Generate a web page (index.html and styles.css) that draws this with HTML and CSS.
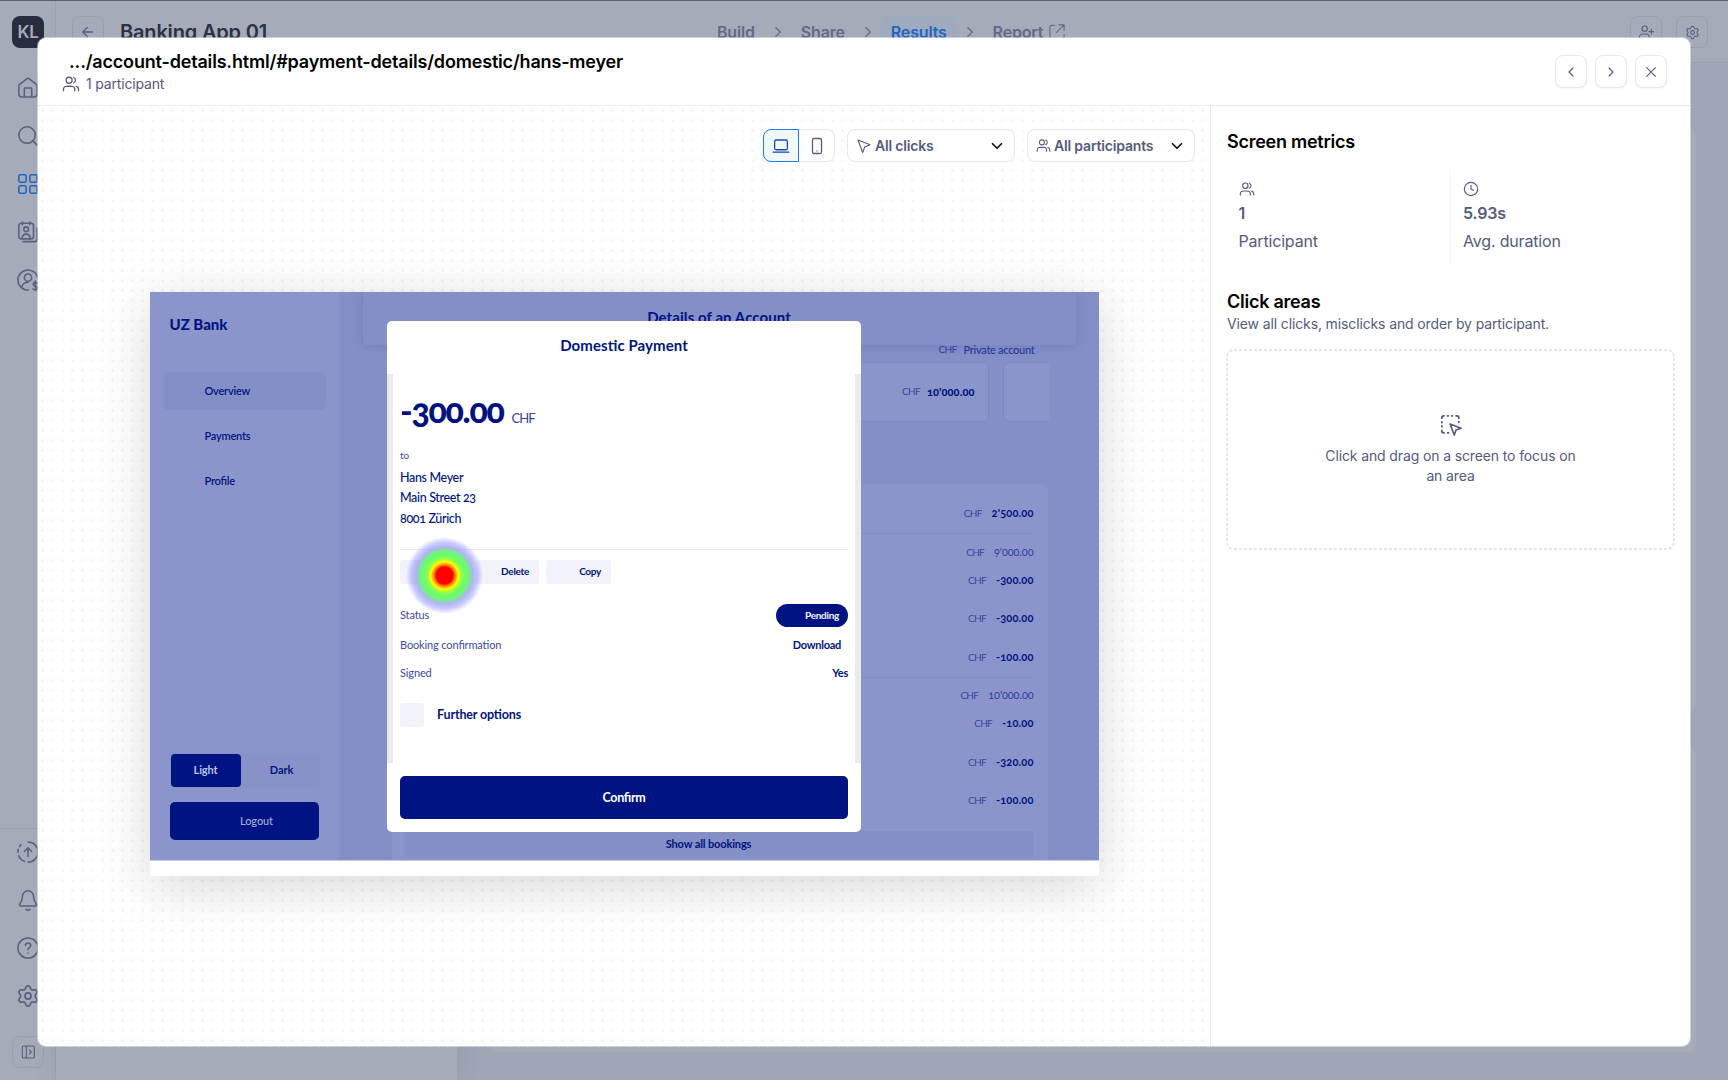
FILE: index.html
```html
<!DOCTYPE html>
<html lang="en">
<head>
<meta charset="utf-8">
<title>Banking App 01 – Results</title>
<link rel="stylesheet" href="styles.css">
</head>
<body>
<svg class="sprite" aria-hidden="true">
  <symbol id="i-users" viewBox="0 0 24 24"><path d="M22 21V19C22 17.14 20.73 15.57 19 15.13M15.5 3.29C16.97 3.88 18 5.32 18 7C18 8.68 16.97 10.12 15.5 10.71M17 21C17 19.14 17 18.2 16.7 17.47C16.29 16.49 15.51 15.71 14.53 15.3C13.8 15 12.86 15 11 15H8C6.14 15 5.2 15 4.47 15.3C3.49 15.71 2.71 16.49 2.3 17.47C2 18.2 2 19.14 2 21M13.5 7C13.5 9.21 11.71 11 9.5 11C7.29 11 5.5 9.21 5.5 7C5.5 4.79 7.29 3 9.5 3C11.71 3 13.5 4.79 13.5 7Z"/></symbol>
  <symbol id="i-gear" viewBox="0 0 24 24"><path d="M9.395 19.371L9.979 20.686C10.153 21.077 10.437 21.409 10.796 21.643C11.155 21.876 11.574 22 12.002 22C12.43 22 12.849 21.876 13.208 21.643C13.567 21.409 13.85 21.077 14.024 20.686L14.608 19.371C14.817 18.905 15.166 18.516 15.608 18.26C16.053 18.003 16.568 17.894 17.078 17.948L18.508 18.1C18.934 18.145 19.364 18.066 19.745 17.871C20.127 17.677 20.443 17.376 20.657 17.006C20.871 16.635 20.974 16.21 20.951 15.783C20.929 15.356 20.783 14.944 20.531 14.598L19.684 13.434C19.383 13.017 19.221 12.515 19.224 12C19.224 11.487 19.386 10.986 19.688 10.571L20.535 9.408C20.787 9.062 20.933 8.65 20.955 8.223C20.978 7.795 20.876 7.371 20.662 7C20.448 6.629 20.131 6.328 19.75 6.134C19.368 5.94 18.939 5.861 18.513 5.906L17.083 6.058C16.572 6.111 16.058 6.002 15.613 5.746C15.17 5.488 14.82 5.097 14.613 4.629L14.024 3.314C13.85 2.923 13.567 2.591 13.208 2.357C12.849 2.124 12.43 2 12.002 2C11.574 2 11.155 2.124 10.796 2.357C10.437 2.591 10.153 2.923 9.979 3.314L9.395 4.629C9.188 5.097 8.838 5.488 8.395 5.746C7.95 6.002 7.436 6.111 6.925 6.058L5.491 5.906C5.065 5.861 4.635 5.94 4.254 6.134C3.872 6.328 3.556 6.629 3.342 7C3.128 7.371 3.025 7.795 3.048 8.223C3.07 8.65 3.216 9.062 3.468 9.408L4.315 10.571C4.617 10.986 4.78 11.487 4.779 12C4.78 12.513 4.617 13.014 4.315 13.429L3.468 14.592C3.216 14.938 3.07 15.35 3.048 15.777C3.025 16.205 3.128 16.63 3.342 17C3.556 17.371 3.873 17.671 4.254 17.865C4.635 18.06 5.065 18.139 5.491 18.094L6.921 17.942C7.431 17.889 7.946 17.998 8.391 18.254C8.835 18.511 9.187 18.902 9.395 19.371Z"/><circle cx="12" cy="12" r="3"/></symbol>
  <symbol id="i-right" viewBox="0 0 24 24"><path d="M9 18l6-6-6-6"/></symbol>
  <symbol id="i-left" viewBox="0 0 24 24"><path d="M15 18l-6-6 6-6"/></symbol>
  <symbol id="i-down" viewBox="0 0 24 24"><path d="M6 9l6 6 6-6"/></symbol>
</svg>

<div class="app">
  <nav class="rail">
    <div class="avatar">KL</div>
    <div class="rail-top">
      <svg class="icon" viewBox="0 0 24 24"><path d="M8 21.5V13.6C8 13 8 12.8 8.1 12.5C8.2 12.4 8.4 12.2 8.5 12.1C8.8 12 9 12 9.6 12H14.4C15 12 15.2 12 15.5 12.1C15.6 12.2 15.8 12.4 15.9 12.5C16 12.8 16 13 16 13.6V21.5M11 1.8L3.2 7.8C2.4 8.5 2 9 2 10.2V18.3C2 20.8 3 21.8 5.3 21.8H18.7C21 21.8 22 20.8 22 18.3V10.2C22 9 21.6 8.5 20.8 7.8L13 1.8C12.4 1.3 11.6 1.3 11 1.8Z"/></svg>
      <svg class="icon" viewBox="0 0 24 24"><circle cx="11" cy="11" r="9"/><path d="M22 22l-4.5-4.5"/></svg>
      <svg class="icon is-active" viewBox="0 0 24 24"><rect x="2" y="2" width="8" height="8" rx="1.5"/><rect x="14" y="2" width="8" height="8" rx="1.5"/><rect x="2" y="14" width="8" height="8" rx="1.5"/><rect x="14" y="14" width="8" height="8" rx="1.5"/></svg>
      <svg class="icon" viewBox="0 0 24 24"><path d="M6 1v3M14 1v3M22 8v11.500C22 21.500 21 22.500 19 22.500H6.500"/><rect x="2" y="2.500" width="16" height="17" rx="2.500"/><circle cx="10" cy="9" r="2.600"/><path d="M5.500 19.500C5.700 15.800 7.200 14.300 10 14.300C12.800 14.300 14.300 15.800 14.500 19.500"/></svg>
      <svg class="icon" viewBox="0 0 24 24"><path d="M12.500 23C6 23 1 18 1 12C1 6 6 1 12 1C17.500 1 22 5 23 10"/><circle cx="12" cy="9.500" r="4"/><path d="M5 20C6 16 8.500 14.500 12 14.500M22.500 15.500C21.500 14.500 17.500 14.300 17.500 16.700C17.500 19.500 22.500 18 22.500 20.800C22.500 23 18.500 23 17.300 21.800M20 13v11.500"/></svg>
    </div>
    <div class="rail-bottom">
      <svg class="icon" viewBox="0 0 24 24"><path d="M16 11.500l-4-4-4 4M12 7.500V17M12 1A11 11 0 0 1 12 23M1.800 16A11 11 0 0 0 8 22.200M1 12.500A11 11 0 0 1 1.400 9M2.800 6A11 11 0 0 1 4.300 4.200"/></svg>
      <svg class="icon" viewBox="0 0 24 24"><path d="M10 22.300C11 23.200 13 23.200 14 22.300M18 8A6 6 0 0 0 6 8C6 11.500 5 13.500 3.500 15.500C2.500 17 2 18.500 4 18.500H20C22 18.500 21.500 17 20.500 15.500C19 13.500 18 11.500 18 8Z"/></svg>
      <svg class="icon" viewBox="0 0 24 24"><circle cx="12" cy="12" r="11"/><path d="M9 9C9.300 7.400 10.600 6.500 12 6.500C13.700 6.500 15 7.700 15 9.300C15 11.500 12 11.800 12 14M12 17.500h.01"/></svg>
      <svg class="icon" viewBox="0 0 24 24"><use href="#i-gear" transform="translate(-1.200 -1.200) scale(1.100)"/></svg>
      <span class="ghost-btn"><svg class="icon s16" viewBox="0 0 24 24"><rect x="3.500" y="3" width="18" height="18" rx="1.500"/><path d="M9.500 3v18M14 9l3 3-3 3"/></svg></span>
    </div>
  </nav>

  <div class="workspace">
    <header class="topbar">
      <span class="ghost-btn"><svg class="icon s18" viewBox="0 0 24 24"><path d="M18 12H5.500M11 6l-6 6 6 6"/></svg></span>
      <h1 class="project">Banking App 01</h1>
      <div class="steps">
        <span>Build</span><svg class="icon s18"><use href="#i-right"/></svg>
        <span>Share</span><svg class="icon s18"><use href="#i-right"/></svg>
        <span class="current">Results</span><svg class="icon s18"><use href="#i-right"/></svg>
        <span>Report</span><svg class="icon s18 ext" viewBox="0 0 24 24"><path d="M9 3H5C3.500 3 2.500 4 2.500 5.500V19C2.500 20.500 3.500 21.500 5 21.500H19C20.500 21.500 21.500 20.500 21.500 19V15M14.500 2.500H21.500V9.500M21.500 2.500L11.500 12.500"/></svg>
      </div>
      <div class="top-actions">
        <span class="ghost-btn"><svg class="icon s16" viewBox="0 0 24 24"><path d="M20 8v7M16.500 11.500h7M14 7A4 4 0 1 1 6 7A4 4 0 0 1 14 7ZM2 21C2 17 4 15 7.500 15H12C15 15 17 17 17 21"/></svg></span>
        <span class="ghost-btn"><svg class="icon s15"><use href="#i-gear"/></svg></span>
      </div>
    </header>
    <div class="stage">
      <div class="stage-list"></div>
      <div class="stage-cards"><div></div><div></div></div>
    </div>
  </div>
</div>

<section class="modal">
  <header class="modal-head">
    <div>
      <h2 class="modal-title">.../account-details.html/#payment-details/domestic/hans-meyer</h2>
      <p class="modal-sub"><svg class="icon s18"><use href="#i-users"/></svg>1 participant</p>
    </div>
    <div class="head-actions">
      <button class="btn"><svg class="icon s16"><use href="#i-left"/></svg></button>
      <button class="btn"><svg class="icon s16"><use href="#i-right"/></svg></button>
      <button class="btn"><svg class="icon s16" viewBox="0 0 24 24"><path d="M18.500 5.500l-13 13M5.500 5.500l13 13"/></svg></button>
    </div>
  </header>
  <div class="modal-body">
    <div class="canvas">
      <div class="toolbar">
        <div class="segment">
          <span class="seg on"><svg class="icon s18" viewBox="0 0 24 24"><rect x="3.500" y="4" width="17" height="13" rx="2"/><path d="M1.500 20.200h21"/></svg></span>
          <span class="seg"><svg class="icon s18" viewBox="0 0 24 24"><rect x="6" y="2" width="12" height="20" rx="2"/><path d="M12 18.500h.01"/></svg></span>
        </div>
        <div class="select"><svg class="icon s16" viewBox="0 0 24 24"><path d="M3 3l7 19 3-8.500L21 10z"/></svg><span>All clicks</span><svg class="icon s18 caret"><use href="#i-down"/></svg></div>
        <div class="select"><svg class="icon s15"><use href="#i-users"/></svg><span>All participants</span><svg class="icon s18 caret"><use href="#i-down"/></svg></div>
      </div>

      <div class="capture">
        <div class="bank">
          <aside class="bank-side">
            <div class="bank-logo">UZ Bank</div>
            <div class="bank-nav"><span class="sel">Overview</span><span>Payments</span><span>Profile</span></div>
            <div class="bank-theme"><span class="lit">Light</span><span>Dark</span></div>
            <div class="bank-logout">Logout</div>
          </aside>
          <main class="bank-main">
            <div class="bank-header">Details of an Account</div>
            <div class="bank-meta"><small>CHF</small><span>Private account</span></div>
            <div class="bank-cards">
              <div class="acct"><small>CHF</small><b>10'000.00</b></div>
              <div class="acct cut"></div>
            </div>
            <div class="bookings">
              <div class="day"><p class="row"><small>CHF</small><b>2'500.00</b></p></div>
              <div class="day">
                <p class="row total"><small>CHF</small><span>9'000.00</span></p>
                <p class="row"><small>CHF</small><b>-300.00</b></p>
                <p class="row"><small>CHF</small><b>-300.00</b></p>
                <p class="row"><small>CHF</small><b>-100.00</b></p>
              </div>
              <div class="day">
                <p class="row total"><small>CHF</small><span>10'000.00</span></p>
                <p class="row"><small>CHF</small><b>-10.00</b></p>
                <p class="row"><small>CHF</small><b>-320.00</b></p>
                <p class="row"><small>CHF</small><b>-100.00</b></p>
              </div>
              <div class="show-all">Show all bookings</div>
            </div>
          </main>
          <div class="dialog">
            <div class="dialog-title">Domestic Payment</div>
            <div class="dialog-body">
              <div class="amount"><b>-300.00</b><span>CHF</span></div>
              <div class="to">to</div>
              <div class="address">Hans Meyer<br>Main Street 23<br>8001 Zürich</div>
              <div class="chips"><span class="chip first"></span><span class="chip del">Delete</span><span class="chip copy">Copy</span></div>
              <div class="fact"><span>Status</span><span class="pending">Pending</span></div>
              <div class="fact book"><span>Booking confirmation</span><b>Download</b></div>
              <div class="fact signed"><span>Signed</span><b>Yes</b></div>
              <div class="further"><i></i>Further options</div>
            </div>
            <div class="confirm">Confirm</div>
          </div>
          <div class="heat"></div>
        </div>
      </div>
    </div>

    <aside class="panel">
      <h3>Screen metrics</h3>
      <div class="metrics">
        <div class="metric"><svg class="icon s15"><use href="#i-users"/></svg><b>1</b><span>Participant</span></div>
        <div class="metric"><svg class="icon s16" viewBox="0 0 24 24"><circle cx="12" cy="12" r="10"/><path d="M12 6.500V12l3.500 2"/></svg><b>5.93s</b><span>Avg. duration</span></div>
      </div>
      <h3>Click areas</h3>
      <p class="hint">View all clicks, misclicks and order by participant.</p>
      <div class="dropzone">
        <svg class="dashes" aria-hidden="true"><rect x="1" y="1" width="446" height="198" rx="7"/></svg>
        <svg class="icon s22" viewBox="0 0 24 24"><path d="M2 4.500V4A2 2 0 0 1 4 2h.5M8.300 2h.8M12.700 2h.8M17.500 2H18.500A2 2 0 0 1 20.500 4v.500M20.500 8.300v.8M2 8.500v.8M2 13v.8M2 18v.5A2 2 0 0 0 4 20.500h.5M8.300 20.500h1" stroke-width="2"/><path d="M11 11l4.500 12 2-5.500L23 15.500z" stroke-width="1.800"/></svg>
        <p>Click and drag on a screen to focus on an area</p>
      </div>
    </aside>
  </div>
</section>
</body>
</html>
```
FILE: styles.css
```css
* { box-sizing: border-box; }
body, h1, h2, h3, p { margin: 0; }
body {
  width: 1728px; height: 1080px; overflow: hidden;
  font-family: Inter, "Liberation Sans", sans-serif;
  letter-spacing: -0.011em; color: #555b7d; background: #a6abb9;
}
.sprite { position: absolute; width: 0; height: 0; }
.icon { width: 22px; height: 22px; flex: none; fill: none; stroke: currentColor; stroke-width: 1.7; stroke-linecap: round; stroke-linejoin: round; }
.s15 { width: 15px; height: 15px; }
.s16 { width: 16px; height: 16px; }
.s18 { width: 18px; height: 18px; }
.s22 { width: 22px; height: 22px; }

/* dimmed page behind the modal */
.app { display: flex; width: 1728px; height: 1080px; border-top: 1px solid #5c5d68; color: #5a6080; }
.rail { width: 56px; display: flex; flex-direction: column; border-right: 1px solid #9ca1b1; }
.avatar { width: 32px; height: 32px; margin: 15px 0 0 12px; border-radius: 8px; background: #272d3e; color: #a6abb9; font: 600 17px/33px Inter, sans-serif; letter-spacing: -0.02em; text-align: center; }
.rail-top { display: flex; flex-direction: column; gap: 26px; padding: 29px 0 0 17px; }
.rail-top .is-active { color: #2464c4; }
.rail-bottom { margin-top: auto; height: 252px; padding: 12px 0 0 17px; border-top: 1px solid #9ca1b1; display: flex; flex-direction: column; gap: 26px; }
.rail-bottom .ghost-btn { margin: 3px 0 0 -5px; }
.ghost-btn { width: 32px; height: 32px; flex: none; display: flex; align-items: center; justify-content: center; border: 1px solid #9a9fb0; border-radius: 8px; }
.workspace { flex: 1; display: flex; flex-direction: column; }
.topbar { height: 63px; padding: 15px 18px 0 16px; display: flex; align-items: flex-start; border-bottom: 1px solid #9a9fb0; }
.project { width: 587px; margin-left: 16px; font-size: 20px; font-weight: 600; line-height: 33px; color: #2b3142; }
.steps { display: flex; align-items: center; font-size: 16px; font-weight: 600; line-height: 34px; margin: -1px 0 0 10px; color: #636987; flex: 1; }
.steps .icon { margin: 0 14px; stroke-width: 1.5; }
.steps .current { margin: 0 -10px; padding: 0 10px; border-radius: 8px; background: #9faabf; color: #2563bd; }
.steps .ext { margin: 0 0 0 5px; }
.top-actions { display: flex; gap: 14px; margin-right: 2px; }
.stage { flex: 1; display: flex; background: #a1a6b6; }
.stage-list { width: 401px; background: #a6abb9; box-shadow: 0 0 24px rgba(60, 70, 100, .12); }
.stage-cards { flex: 1; margin: 65px 32px 28px 33px; display: grid; grid-template-rows: 585px 305px; gap: 34px; }
.stage-cards div { background: #a6abb9; border-radius: 8px; }

/* modal */
.modal { position: absolute; left: 38px; top: 38px; width: 1652px; height: 1008px; display: flex; flex-direction: column; background: #fff; border-radius: 8px; box-shadow: 0 0 0 1px rgba(255, 255, 255, .45); }
.modal-head { height: 68px; flex: none; display: flex; justify-content: space-between; padding: 11px 23px 0 24px; border-bottom: 1px solid #e9e9ec; }
.modal-title { padding-left: 7px; font-size: 18px; line-height: 25px; font-weight: 600; color: #000; }
.modal-sub { display: flex; align-items: center; gap: 6px; height: 19px; font-size: 14px; line-height: 19px; }
.head-actions { display: flex; gap: 8px; padding-top: 6px; }
.btn { width: 32px; height: 33px; padding: 0; display: flex; align-items: center; justify-content: center; border: 1px solid #e6e7ec; border-radius: 8px; background: #fff; color: #555b7d; box-shadow: 0 1px 2px rgba(20, 30, 60, .05); }
.modal-body { flex: 1; display: flex; border-radius: 0 0 8px 8px; }
.canvas { width: 1172px; flex: none; padding: 23px 15px 0 0; display: flex; flex-direction: column; background: radial-gradient(circle at 4.500px 4.500px, #f4f4f6 1px, rgba(255, 255, 255, 0) 1.700px) 0 0 / 10px 10px; border-radius: 0 0 0 8px; }

.toolbar { display: flex; justify-content: flex-end; gap: 12px; height: 33px; }
.segment, .select { display: flex; align-items: center; border: 1px solid #e6e7ec; border-radius: 8px; background: #fff; }
.segment { width: 72px; }
.seg { flex: 1; height: 33px; display: flex; align-items: center; justify-content: center; }
.seg.on { flex: none; width: 36px; margin: -1px 0 -1px -1px; border: 1px solid #1c7cf5; border-radius: 8px 0 0 8px; background: #eff8ff; color: #1746b4; }
.select { width: 168px; padding: 0 10px 0 8px; font-size: 14px; font-weight: 600; }
.select span { margin: 0 auto 0 3px; }
.select .caret { color: #111; stroke-width: 2.300; margin-right: -2px; }

/* recorded screen */
.capture { width: 949px; height: 584px; margin: 130px 0 0 111.500px; background: #fff; box-shadow: 0 10px 50px rgba(0, 0, 0, .16); }
.bank { position: relative; display: flex; width: 949px; height: 568px; overflow: hidden; background: #848ec7; color: #00157f; font-family: Lato, "Open Sans", sans-serif; font-size: 11px; letter-spacing: -0.012em; font-feature-settings: "onum", "liga"; box-shadow: 0 1px 0 rgba(132, 142, 199, .45); }
.bank small, .bank b, .bank p { font-size: inherit; }
.bank small { color: #3847a0; font-size: 10px; letter-spacing: -0.07em; }
.bank-side { width: 189px; flex: none; display: flex; flex-direction: column; background: #8c95cb; }
.bank-logo { margin: 22px 0 0 20px; font-size: 15px; line-height: 20px; font-weight: 900; letter-spacing: 0; }
.bank-nav { margin: 38px 13px 0 13px; display: flex; flex-direction: column; gap: 7px; font-weight: 600; letter-spacing: -0.02em; }
.bank-nav span { height: 38px; line-height: 37px; padding-left: 42px; border-radius: 5px; }
.bank-nav .sel { background: #848ec7; }
.bank-theme { margin: auto 19px 14px 20px; height: 35px; display: flex; align-items: center; border-radius: 5px; background: #8892c9; font-weight: 700; text-align: center; }
.bank-theme span { flex: 1; height: 33px; line-height: 32px; margin: 0 1px; border-radius: 4px; }
.bank-theme .lit { flex: none; width: 70px; background: #001382; color: #b9c0ea; }
.bank-theme span + span { padding-left: 2px; }
.bank-logout { margin: 0 20px 20px 20px; height: 38px; line-height: 37px; padding-left: 25px; border-radius: 5px; background: #001382; color: #a3abd9; text-align: center; font-weight: 500; }
.bank-main { flex: 1; display: flex; flex-direction: column; }
.bank-header { height: 53px; flex: none; margin: 0 23px 0 24px; font-size: 15px; font-weight: 700; line-height: 51px; text-align: center; letter-spacing: 0.005em; background: #848ec7; box-shadow: 0 1px 10px rgba(20, 30, 120, .12); }
.bank-meta { height: 17px; flex: none; display: flex; justify-content: flex-end; gap: 7px; margin-right: 64px; line-height: 9px; color: #283799; font-weight: 500; letter-spacing: -0.025em; }
.bank-cards { height: 60px; flex: none; display: flex; gap: 14px; margin: 0 50px 0 53px; }
.acct { flex: 1; display: flex; justify-content: flex-end; align-items: center; gap: 7px; padding: 0 13px 2px 0; border: 1px solid #7d87c1; border-radius: 6px; background: #8c95cb; }
.acct b { font-weight: 900; letter-spacing: 0.01em; }
.acct.cut { flex: none; width: 46px; border-right: 0; border-radius: 6px 0 0 6px; }
.bookings { flex: 1; margin: 62px 51px 0 53px; padding: 0 14px 0 13px; display: flex; flex-direction: column; border-radius: 6px 6px 0 0; background: #8c95cb; }
.day { border-bottom: 1px solid #828bc4; padding: 7.500px 0 10px; }
.day:first-child { padding: 18.500px 0 10.500px; }
.day:nth-child(3) { border: 0; padding-bottom: 21px; }
.row { height: 20px; line-height: 20px; display: flex; justify-content: flex-end; gap: 10px; }
.row b { letter-spacing: 0.015em; }
.row + .row { margin-top: 18.500px; }
.row.total { color: #2f3e9c; }
.row.total + .row { margin-top: 8px; }
.show-all { height: 27px; line-height: 26px; border-radius: 4px; background: #848ec7; text-align: center; font-weight: 700; padding-right: 21px; }

.dialog { position: absolute; left: 237.500px; top: 29px; width: 474px; height: 511px; display: flex; flex-direction: column; border-radius: 5px; background: #fff; }
.dialog-title { height: 53px; line-height: 49px; flex: none; text-align: center; font-size: 15px; font-weight: 700; letter-spacing: 0.005em; }
.dialog-body { height: 389px; flex: none; border: solid #ebebeb; border-width: 0 6px; padding: 0 7px; }
.amount { height: 68px; display: flex; align-items: baseline; gap: 8px; line-height: 72px; font-size: 13px; letter-spacing: -0.07em; color: #33439c; }
.amount b { font-size: 34px; font-weight: 900; letter-spacing: -0.038em; color: #00127f; }
.to { height: 24px; line-height: 27px; font-size: 10px; color: #3d4ca2; }
.address { height: 84px; padding-top: 1.500px; line-height: 20.700px; font-size: 12.500px; font-weight: 500; letter-spacing: -0.028em; border-bottom: 1px solid #ebebee; }
.chips { display: flex; gap: 7px; padding: 10px 0 19px; font-size: 10px; font-weight: 700; letter-spacing: -0.03em; }
.chip { height: 24px; border-radius: 3px; background: #f1f2fa; text-align: right; padding-right: 10px; line-height: 22px; }
.chip.first { width: 69px; }
.chip.del { width: 63px; }
.chip.copy { width: 65px; }
.fact { display: flex; align-items: center; justify-content: space-between; height: 24px; color: #3b4aa2; }
.fact > :first-child { padding-bottom: 1px; }
.fact b { color: #001480; letter-spacing: -0.025em; padding-bottom: 1px; }
.fact.book { height: 36px; padding-right: 7px; }
.fact.signed { height: 20px; }
.pending { width: 72px; height: 23px; line-height: 22px; padding-right: 9px; border-radius: 12px; background: #001382; color: #f2f3fb; font-size: 10px; font-weight: 700; letter-spacing: -0.03em; text-align: right; }
.further { display: flex; align-items: center; gap: 13px; height: 24px; line-height: 22px; margin-top: 20px; font-size: 12.500px; font-weight: 700; letter-spacing: -0.012em; }
.further i { width: 24px; height: 24px; border-radius: 3px; background: #f1f2fa; }
.confirm { margin: 13px 13px 0; height: 43px; line-height: 43px; border-radius: 5px; background: #001382; color: #fff; text-align: center; font-size: 12.500px; font-weight: 700; letter-spacing: -0.025em; }
.heat { position: absolute; left: 256.500px; top: 245px; width: 77px; height: 77px; border-radius: 50%; background: radial-gradient(circle closest-side, #f00 22%, #ff7a00 27%, #ff0 36%, #9aff45 43%, #66ff66 53%, #77ef84 64%, rgba(140, 150, 240, .7) 74%, rgba(120, 120, 255, .4) 86%, rgba(120, 120, 255, 0) 100%); }

/* metrics panel */
.panel { flex: 1; padding: 22px 15px 0 16px; border-left: 1px solid #e8e8ee; }
.panel h3 { font-size: 18px; line-height: 28px; font-weight: 600; letter-spacing: -0.014em; color: #000; }
.metrics { display: flex; height: 96px; margin: 13px 0 23px; }
.metric { width: 224px; padding: 12px 0 0 12px; display: flex; flex-direction: column; font-size: 16px; }
.metric:first-child { width: 223px; padding-left: 11.500px; }
.metric + .metric { border-left: 1px solid #f3f3f6; }
.metric .icon { width: 16px; height: 16px; }
.metric b { font-weight: 600; line-height: 32px; }
.metric span { line-height: 24px; }
.hint { font-size: 14px; line-height: 20px; letter-spacing: -0.009em; margin: -2px 0 15px; }
.dropzone { position: relative; width: 449px; height: 201px; margin-left: -1px; padding-top: 65px; display: flex; flex-direction: column; align-items: center; }
.dropzone p { width: 260px; margin-top: 10px; font-size: 14px; line-height: 20px; letter-spacing: -0.009em; text-align: center; }
.dashes { position: absolute; inset: 0; width: 449px; height: 201px; fill: none; stroke: #e3e4ef; stroke-width: 2; stroke-dasharray: 3 2; }
.dashes rect { width: 447px; height: 199px; }
```
